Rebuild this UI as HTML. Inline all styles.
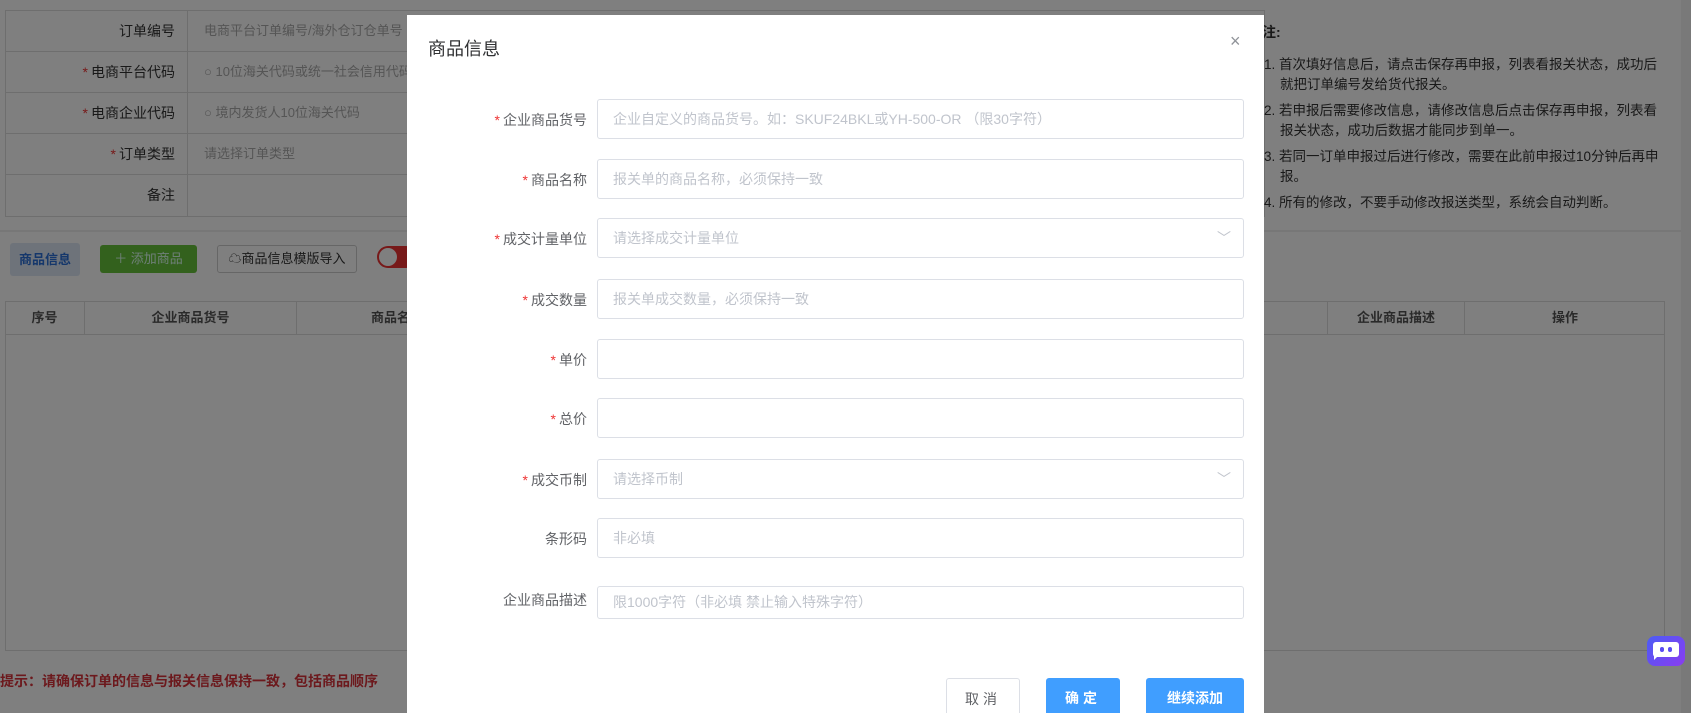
<!DOCTYPE html>
<html style="overflow:hidden;height:713px"><head><meta charset="utf-8"><style>
*{box-sizing:border-box;margin:0;padding:0}
body{width:1691px;height:713px;overflow:hidden;position:relative;background:#fff;font-family:"Liberation Sans","Noto Sans CJK SC",sans-serif;font-size:13px;color:#333}
.abs{position:absolute}
.tbl{left:5px;top:10px;width:1260px;border:1px solid #ddd}
.tr{height:41px;border-bottom:1px solid #ddd;display:flex}
.tr:last-child{border-bottom:none}
.tl{width:182px;border-right:1px solid #ddd;text-align:right;padding-right:12px;line-height:40px;font-size:14px;color:#333}
.tv{line-height:40px;padding-left:16px;color:#aaa;font-size:13px}
.st{color:#e33;margin-right:3px}
.ov{left:0;top:0;width:1691px;height:713px;background:rgba(0,0,0,.5)}
.modal{left:407px;top:15px;width:857px;height:698px;background:#fff;overflow:hidden}
.lab{position:absolute;right:calc(857px - 180px);font-size:14px;color:#606266;text-align:right;white-space:nowrap}
.inp{position:absolute;left:190px;width:647px;height:40px;border:1px solid #dcdfe6;border-radius:3px;padding-left:15px;line-height:38px;color:#c0c4cc;font-size:14px}
.btn{position:absolute;top:663px;height:50px;font-size:14px;font-weight:bold;text-align:center;line-height:40px;border-radius:3px}
.note div{padding-left:16px;text-indent:-16px;margin-top:6px}
</style></head><body>
<div class="abs tbl">
 <div class="tr"><div class="tl">订单编号</div><div class="tv">电商平台订单编号/海外仓订仓单号</div></div>
 <div class="tr"><div class="tl"><span class="st">*</span>电商平台代码</div><div class="tv">○ 10位海关代码或统一社会信用代码</div></div>
 <div class="tr"><div class="tl"><span class="st">*</span>电商企业代码</div><div class="tv">○ 境内发货人10位海关代码</div></div>
 <div class="tr"><div class="tl"><span class="st">*</span>订单类型</div><div class="tv">请选择订单类型</div></div>
 <div class="tr"><div class="tl">备注</div><div class="tv"></div></div>
</div>
<div class="abs" style="left:0;top:230px;width:1691px;height:2px;background:#eee"></div>
<div class="abs" style="left:10px;top:243px;width:70px;height:33px;background:#dde7f5;color:#2b6fd6;font-weight:bold;line-height:33px;text-align:center;border-radius:3px">商品信息</div>
<div class="abs" style="left:100px;top:245px;width:97px;height:28px;background:#67c23a;color:#dfe;line-height:28px;text-align:center;border-radius:3px">＋ 添加商品</div>
<div class="abs" style="left:217px;top:245px;width:140px;height:28px;border:1px solid #ccc;line-height:26px;text-align:center;border-radius:3px;color:#333">☁商品信息模版导入</div>
<div class="abs" style="left:377px;top:246px;width:40px;height:22px;background:#e33;border-radius:11px"><div style="margin:2px;width:18px;height:18px;border-radius:50%;background:#fff"></div></div>
<div class="abs" style="left:5px;top:301px;width:1660px;height:350px;border:1px solid #ddd"></div>
<div class="abs" style="left:5px;top:301px;width:1660px;height:34px;border-bottom:1px solid #ddd;display:flex;font-weight:bold;color:#555;line-height:34px;text-align:center">
 <div style="width:80px;border-right:1px solid #ddd">序号</div><div style="width:212px;border-right:1px solid #ddd">企业商品货号</div><div style="width:200px">商品名称</div>
</div>
<div class="abs" style="left:1240px;top:301px;line-height:34px;font-weight:bold;color:#555">码</div>
<div class="abs" style="left:1327px;top:301px;width:138px;height:34px;border-left:1px solid #ddd;border-right:1px solid #ddd;line-height:34px;text-align:center;font-weight:bold;color:#555">企业商品描述</div>
<div class="abs" style="left:1465px;top:301px;width:200px;line-height:34px;text-align:center;font-weight:bold;color:#555">操作</div>
<div class="abs" style="left:1262px;top:22px;font-weight:bold;font-size:14px">注:</div>
<div class="abs note" style="left:1264px;top:49px;width:406px;line-height:20px;font-size:13.5px;color:#333">
 <div>1. 首次填好信息后，请点击保存再申报，列表看报关状态，成功后就把订单编号发给货代报关。</div>
 <div>2. 若申报后需要修改信息，请修改信息后点击保存再申报，列表看报关状态，成功后数据才能同步到单一。</div>
 <div>3. 若同一订单申报过后进行修改，需要在此前申报过10分钟后再申报。</div>
 <div>4. 所有的修改，不要手动修改报送类型，系统会自动判断。</div>
</div>
<div class="abs" style="left:0;top:671px;font-size:14px;font-weight:bold;color:#d9323a">提示：请确保订单的信息与报关信息保持一致，包括商品顺序</div>
<div class="abs" style="left:1681px;top:0;width:10px;height:713px;background:#f2f2f2"></div>
<div class="abs ov"></div>
<div class="abs modal">
 <div class="abs" style="left:21px;top:20px;font-size:18px;color:#303133">商品信息</div>
 <div class="abs" style="left:823px;top:16px;font-size:18px;color:#909399">×</div>
 <div class="lab" style="top:95px"><span class="st">*</span>企业商品货号</div><div class="inp" style="top:84px">企业自定义的商品货号。如：SKUF24BKL或YH-500-OR （限30字符）</div>
 <div class="lab" style="top:155px"><span class="st">*</span>商品名称</div><div class="inp" style="top:144px">报关单的商品名称，必须保持一致</div>
 <div class="lab" style="top:214px"><span class="st">*</span>成交计量单位</div><div class="inp" style="top:203px">请选择成交计量单位<span style="position:absolute;right:12px;color:#c0c4cc">﹀</span></div>
 <div class="lab" style="top:275px"><span class="st">*</span>成交数量</div><div class="inp" style="top:264px">报关单成交数量，必须保持一致</div>
 <div class="lab" style="top:335px"><span class="st">*</span>单价</div><div class="inp" style="top:324px"></div>
 <div class="lab" style="top:394px"><span class="st">*</span>总价</div><div class="inp" style="top:383px"></div>
 <div class="lab" style="top:455px"><span class="st">*</span>成交币制</div><div class="inp" style="top:444px">请选择币制<span style="position:absolute;right:12px;color:#c0c4cc">﹀</span></div>
 <div class="lab" style="top:514px">条形码</div><div class="inp" style="top:503px">非必填</div>
 <div class="lab" style="top:575px">企业商品描述</div><div class="inp" style="top:571px;height:33px;line-height:30px">限1000字符（非必填 禁止输入特殊字符）</div>
 <div class="btn" style="left:539px;width:74px;border:1px solid #dcdfe6;color:#606266;font-weight:normal;letter-spacing:4px">取消</div>
 <div class="btn" style="left:639px;width:74px;background:#409eff;color:#fff;letter-spacing:4px">确定</div>
 <div class="btn" style="left:739px;width:98px;background:#409eff;color:#fff">继续添加</div>
</div>
<div class="abs" style="left:1647px;top:636px;width:38px;height:30px;border-radius:8px;background:linear-gradient(135deg,#4b5cf5,#8a3cf0)">
 <div style="position:absolute;left:6px;top:6px;width:26px;height:15px;background:#fff;border-radius:3px"></div>
 <div style="position:absolute;left:7px;top:19px;width:0;height:0;border-left:5px solid #fff;border-bottom:5px solid transparent"></div>
 <div style="position:absolute;left:13px;top:11px;width:4px;height:5px;border-radius:2px;background:#5a4cf2"></div>
 <div style="position:absolute;left:21px;top:11px;width:4px;height:5px;border-radius:2px;background:#5a4cf2"></div>
</div>
</body></html>
